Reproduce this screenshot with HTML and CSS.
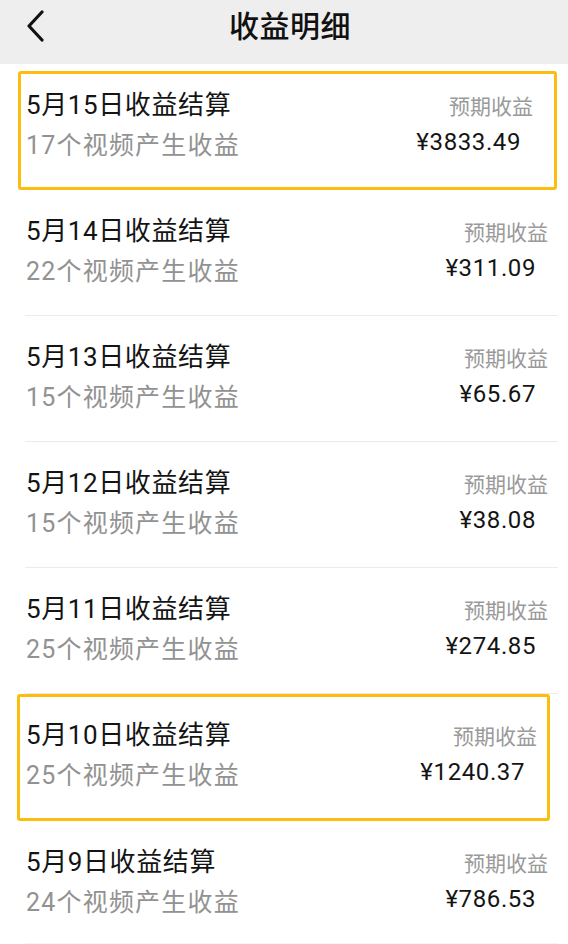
FILE: index.html
```html
<!DOCTYPE html>
<html lang="zh-CN">
<head>
<meta charset="utf-8">
<title>收益明细</title>
<link rel="stylesheet" href="styles.css">
</head>
<body>
<header class="topbar">
  <div class="back">
    <svg width="20" height="32" viewBox="0 0 20 32"><path d="M16 2 L3 16 L16 30" fill="none" stroke="#111" stroke-width="3.2" stroke-linecap="round" stroke-linejoin="round"/></svg>
  </div>
  <h1 class="title">收益明细</h1>
  <div></div>
</header>
<main class="list">
  <div class="row hl hl-first">
    <div class="left"><div class="name">5月15日收益结算</div><div class="sub">17个视频产生收益</div></div>
    <div class="right"><div class="label">预期收益</div><div class="amount">¥3833.49</div></div>
  </div>
  <div class="row">
    <div class="left"><div class="name">5月14日收益结算</div><div class="sub">22个视频产生收益</div></div>
    <div class="right"><div class="label">预期收益</div><div class="amount">¥311.09</div></div>
  </div>
  <div class="row">
    <div class="left"><div class="name">5月13日收益结算</div><div class="sub">15个视频产生收益</div></div>
    <div class="right"><div class="label">预期收益</div><div class="amount">¥65.67</div></div>
  </div>
  <div class="row">
    <div class="left"><div class="name">5月12日收益结算</div><div class="sub">15个视频产生收益</div></div>
    <div class="right"><div class="label">预期收益</div><div class="amount">¥38.08</div></div>
  </div>
  <div class="row">
    <div class="left"><div class="name">5月11日收益结算</div><div class="sub">25个视频产生收益</div></div>
    <div class="right"><div class="label">预期收益</div><div class="amount">¥274.85</div></div>
  </div>
  <div class="row hl hl-mid">
    <div class="left"><div class="name">5月10日收益结算</div><div class="sub">25个视频产生收益</div></div>
    <div class="right"><div class="label">预期收益</div><div class="amount">¥1240.37</div></div>
  </div>
  <div class="row last">
    <div class="left"><div class="name">5月9日收益结算</div><div class="sub">24个视频产生收益</div></div>
    <div class="right"><div class="label">预期收益</div><div class="amount">¥786.53</div></div>
  </div>
</main>
</body>
</html>
```

FILE: styles.css
```css
* { box-sizing: border-box; }
html, body {
  margin: 0;
  padding: 0;
  background: #ffffff;
  font-family: Roboto, "Noto Sans CJK SC", sans-serif;
  color: #1a1a1a;
  width: 568px;
  height: 944px;
  overflow: hidden;
}
.topbar {
  height: 64px;
  background: #eeeeee;
  display: grid;
  grid-template-columns: 64px 1fr 52px;
  align-items: center;
}
.back {
  padding-left: 26px;
  height: 64px;
  padding-top: 8px;
}
.back svg { display: block; }
.title {
  margin: 0;
  text-align: center;
  font-family: "Noto Sans CJK SC", sans-serif;
  font-size: 30px;
  font-weight: 500;
  line-height: 48px;
  color: #111;
  padding-bottom: 20px;
  letter-spacing: 0.5px;
}
.list { display: flex; flex-direction: column; }
.row {
  display: flex;
  justify-content: space-between;
  align-items: flex-start;
  margin: 0 10px 0 25px;
  height: 126px;
  padding: 21px 10px 0 1px;
  border-bottom: 1px solid #ebebeb;
}
.row.last { height: 123px; border-bottom-color: #f4f4f4; }
.hl {
  border: 3px solid #fbbd0e;
  border-radius: 3px;
}
.hl-first {
  margin: 7px 11px 0 18px;
  height: 119px;
  padding: 11px 21px 0 5px;
}
.hl-mid {
  margin: 0 18px 0 17px;
  height: 127px;
  padding: 18px 10px 0 6px;
}
.name {
  font-size: 26px;
  line-height: 40px;
  color: #141414;
  letter-spacing: 0.6px;
}
.sub {
  font-size: 25px;
  line-height: 42px;
  color: #929292;
  letter-spacing: 1.2px;
}
.right {
  display: flex;
  flex-direction: column;
  align-items: flex-end;
  padding-top: 2px;
}
.label {
  font-family: "Noto Sans CJK SC", sans-serif;
  font-size: 21px;
  line-height: 36px;
  color: #9a9a9a;
}
.amount {
  font-size: 24px;
  line-height: 38px;
  color: #141414;
  padding-right: 12px;
  letter-spacing: 0.6px;
}
```
